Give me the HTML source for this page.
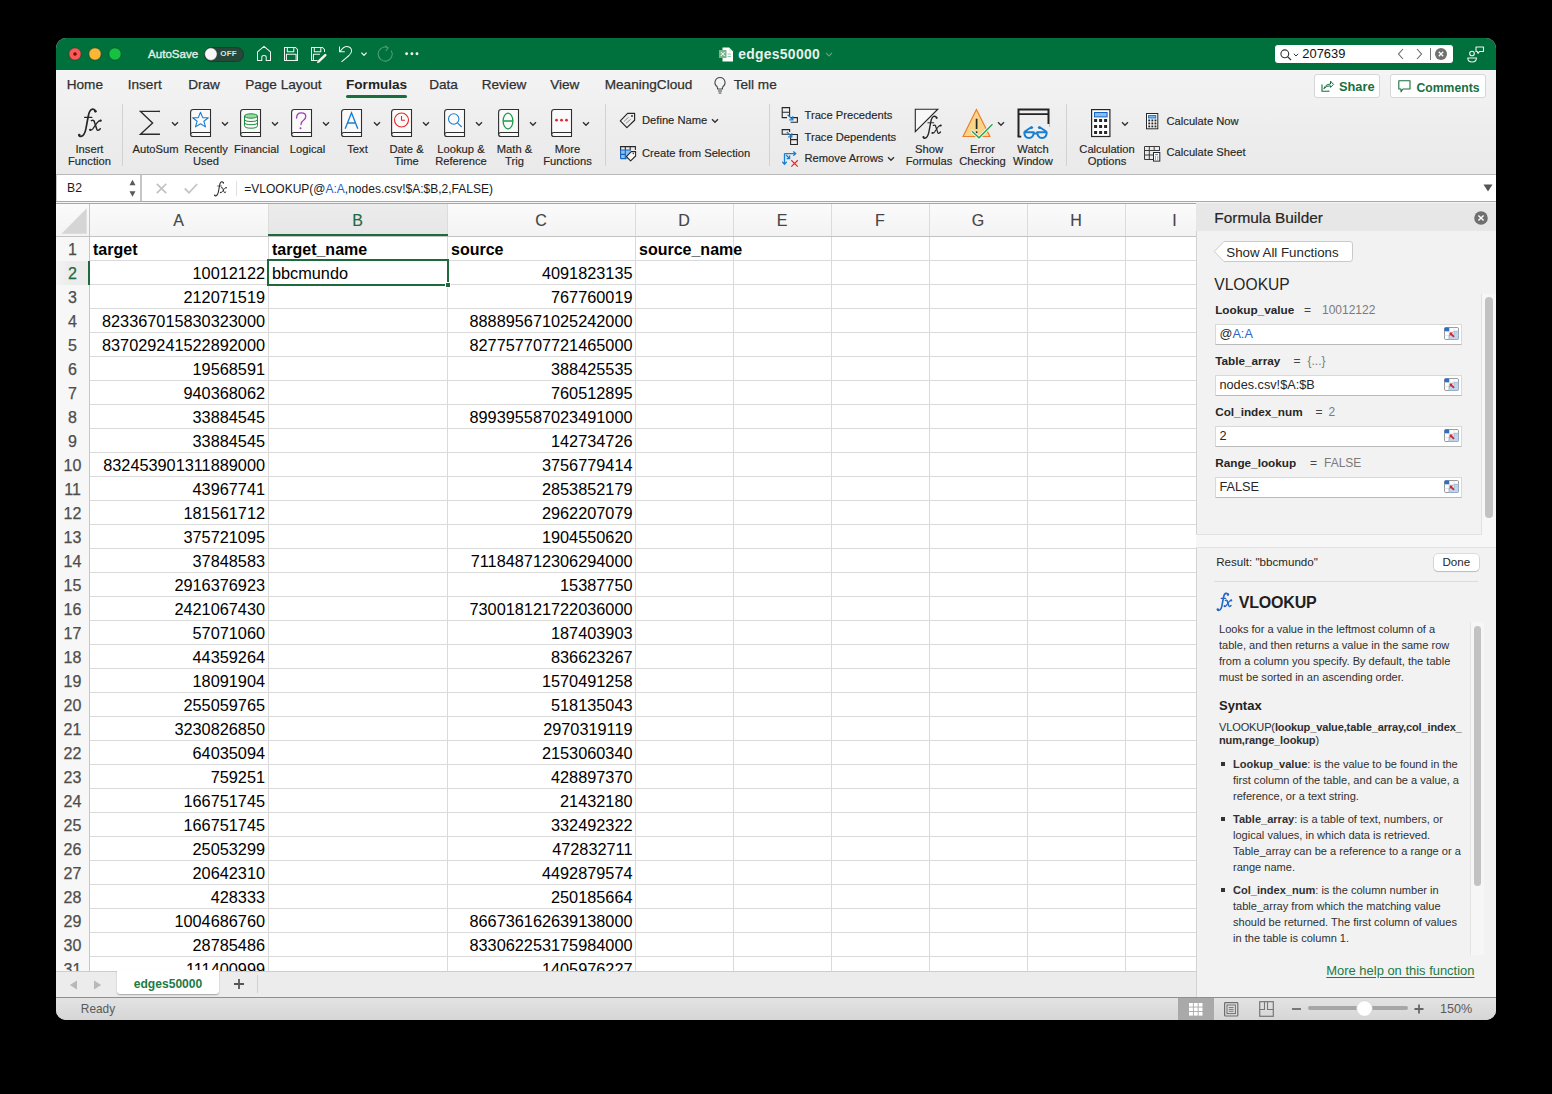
<!DOCTYPE html><html><head><meta charset="utf-8"><style>
*{box-sizing:border-box;margin:0;padding:0}
html,body{width:1552px;height:1094px;background:#000;overflow:hidden;font-family:"Liberation Sans",sans-serif;}
#win{position:absolute;left:56px;top:38px;width:1440px;height:982px;border-radius:10px;overflow:hidden;background:#efefef}
#in{position:absolute;left:-56px;top:-38px;width:1552px;height:1094px}
.a{position:absolute;white-space:nowrap}
svg.a{overflow:visible}
</style></head><body><div id="win"><div id="in"><div class="a" style="left:56px;top:38px;width:1440px;height:32px;background:#00703c"></div>
<svg class="a" style="left:68px;top:47px;" width="14" height="14" viewBox="0 0 14 14"><circle cx="7" cy="7" r="6.2" fill="#ff5757" stroke="#0b4a28" stroke-width="0.7"/></svg>
<svg class="a" style="left:88px;top:47px;" width="14" height="14" viewBox="0 0 14 14"><circle cx="7" cy="7" r="6.2" fill="#fdb535" stroke="#0b4a28" stroke-width="0.7"/></svg>
<svg class="a" style="left:108px;top:47px;" width="14" height="14" viewBox="0 0 14 14"><circle cx="7" cy="7" r="6.2" fill="#16c142" stroke="#0b4a28" stroke-width="0.7"/></svg>
<svg class="a" style="left:72px;top:51px;" width="6" height="6" viewBox="0 0 6 6"><circle cx="3" cy="3" r="1.8" fill="#6b0f0a"/></svg>
<div class="a" style="left:148px;top:48.18px;font-size:11.6px;line-height:11.6px;color:#e4efe8;font-weight:normal;-webkit-text-stroke:0.35px #e4efe8">AutoSave</div>
<div class="a" style="left:204px;top:47px;width:40px;height:14.5px;background:#27473a;border-radius:8px;border:1px solid #1d3a2b"></div>
<svg class="a" style="left:204px;top:47px;" width="16" height="15" viewBox="0 0 16 15"><circle cx="6.9" cy="7.1" r="6.3" fill="#f7f7f7" stroke="#1e3a2a" stroke-width="0.6"/></svg>
<div class="a" style="left:220.3px;top:50.43px;font-size:8.0px;line-height:8.0px;color:#d8e6dc;font-weight:bold;letter-spacing:0.15px">OFF</div>
<svg class="a" style="left:250px;top:42px;" width="172" height="24" viewBox="0 0 172 24"><g fill="none" stroke="#f0f5f1" stroke-width="1.05" stroke-linejoin="round"><path d="M7.5 18.5 V9.8 L14 4.3 L20.5 9.8 V18.5 H16.2 V15.2 Q16.2 13.4 14 13.4 Q11.8 13.4 11.8 15.2 V18.5 Z"/><path d="M34.5 5.5 H45.5 L47.5 7.5 V18.5 H34.5 Z"/><path d="M37.3 5.5 V9.8 H43.8 V5.5"/><path d="M36.4 18.5 V12.3 H46.1 V18.5"/><path d="M67.5 18.5 H61.5 V5.5 H72.5 L74.5 7.5 V10"/><path d="M64.3 5.5 V9.8 H70.8 V5.5"/><path d="M63.4 18.5 V12.3 H70"/><path d="M89.5 4.5 V9.8 H94.8"/><path d="M90 9.6 Q93.5 4.5 97 4.6 Q101.5 5 101.6 9 Q101.5 11 99 13.5 L91.5 19.8"/><path d="M111.4 10.6 L114 13.4 L116.6 10.6" stroke-width="1.2"/></g><path d="M67.6 18.8 L74.4 12.2 Q75.3 11.4 76.2 12.3 Q77 13.2 76.2 14 L69.4 20.6 L67 21.3 Z" fill="#f0f5f1"/><path d="M141.2 8.5 A7 7 0 1 1 137.8 5.6" fill="none" stroke="#4e9c6e" stroke-width="1.05"/><path d="M135 3.8 L138.2 5.8 L135.8 8.8" fill="none" stroke="#4e9c6e" stroke-width="1.05"/><circle cx="156.6" cy="11.8" r="1.45" fill="#f0f5f1"/><circle cx="161.9" cy="11.8" r="1.45" fill="#f0f5f1"/><circle cx="167" cy="11.8" r="1.45" fill="#f0f5f1"/></svg>
<svg class="a" style="left:719px;top:47px;" width="15" height="15" viewBox="0 0 15 15"><path d="M3.5 0.5 H10 L14 4.5 V14.5 H3.5 Z" fill="#ffffff"/><path d="M10 0.5 V4.5 H14" fill="#e6e6e6"/><rect x="0" y="3" width="7.5" height="8" fill="#7bb58e"/><path d="M1.8 5 L5.7 9 M5.7 5 L1.8 9" stroke="#fff" stroke-width="1"/><path d="M8.5 7 H12 M8.5 9.5 H12" stroke="#8fcaa3" stroke-width="1"/></svg>
<div class="a" style="left:738.2px;top:48.43px;font-size:13.9px;line-height:13.9px;color:#e8f1eb;font-weight:bold;letter-spacing:0.3px">edges50000</div>
<svg class="a" style="left:825px;top:52px;" width="8" height="5" viewBox="0 0 8 5"><path d="M1 1 L4 4 L7 1" fill="none" stroke="#5aa57b" stroke-width="1.1"/></svg>
<div class="a" style="left:1275px;top:45px;width:178px;height:18px;background:#fff;border-radius:3px"></div>
<svg class="a" style="left:1280px;top:49px;" width="12" height="12" viewBox="0 0 12 12"><circle cx="4.8" cy="4.8" r="3.9" fill="none" stroke="#333" stroke-width="1.1"/><path d="M7.6 7.6 L11 11" stroke="#333" stroke-width="1.2"/></svg>
<svg class="a" style="left:1293px;top:53px;" width="6" height="4" viewBox="0 0 6 4"><path d="M0.8 0.8 L3 3 L5.2 0.8" fill="none" stroke="#333" stroke-width="1"/></svg>
<div class="a" style="left:1302.3px;top:47.98px;font-size:12.9px;line-height:12.9px;color:#111;font-weight:normal;">207639</div>
<svg class="a" style="left:1397px;top:48px;" width="8" height="12" viewBox="0 0 8 12"><path d="M6 1 L1.5 6 L6 11" fill="none" stroke="#666" stroke-width="1.1"/></svg>
<svg class="a" style="left:1415px;top:48px;" width="8" height="12" viewBox="0 0 8 12"><path d="M2 1 L6.5 6 L2 11" fill="none" stroke="#666" stroke-width="1.1"/></svg>
<div class="a" style="left:1430px;top:48px;width:1px;height:12px;background:#777"></div>
<svg class="a" style="left:1435px;top:48px;" width="12" height="12" viewBox="0 0 12 12"><circle cx="6" cy="6" r="6" fill="#707070"/><path d="M3.8 3.8 L8.2 8.2 M8.2 3.8 L3.8 8.2" stroke="#fff" stroke-width="1.3"/></svg>
<svg class="a" style="left:1467px;top:46px;" width="18" height="17" viewBox="0 0 18 17"><circle cx="5" cy="7.5" r="2.3" fill="none" stroke="#f0f5f1" stroke-width="1.1"/><path d="M0.8 12 H9.4 Q9.4 16 5.1 16 Q0.8 16 0.8 12Z" fill="none" stroke="#f0f5f1" stroke-width="1.1"/><path d="M9 1 H16.5 V5.5 H12.5 L11 7.3 L10.3 5.5 H9 Z" fill="none" stroke="#f0f5f1" stroke-width="1.1" stroke-linejoin="round"/></svg>
<div class="a" style="left:56px;top:70px;width:1440px;height:105px;background:linear-gradient(#f4f4f4,#ededed 55%,#eaeaea)"></div>
<div class="a" style="left:66.7px;top:77.69px;font-size:13.6px;line-height:13.6px;color:#303030;font-weight:normal;-webkit-text-stroke:0.25px #303030">Home</div>
<div class="a" style="left:127.7px;top:77.69px;font-size:13.6px;line-height:13.6px;color:#303030;font-weight:normal;-webkit-text-stroke:0.25px #303030">Insert</div>
<div class="a" style="left:188.2px;top:77.69px;font-size:13.6px;line-height:13.6px;color:#303030;font-weight:normal;-webkit-text-stroke:0.25px #303030">Draw</div>
<div class="a" style="left:245.2px;top:77.69px;font-size:13.6px;line-height:13.6px;color:#303030;font-weight:normal;-webkit-text-stroke:0.25px #303030">Page Layout</div>
<div class="a" style="left:429.2px;top:77.69px;font-size:13.6px;line-height:13.6px;color:#303030;font-weight:normal;-webkit-text-stroke:0.25px #303030">Data</div>
<div class="a" style="left:481.7px;top:77.69px;font-size:13.6px;line-height:13.6px;color:#303030;font-weight:normal;-webkit-text-stroke:0.25px #303030">Review</div>
<div class="a" style="left:550.2px;top:77.69px;font-size:13.6px;line-height:13.6px;color:#303030;font-weight:normal;-webkit-text-stroke:0.25px #303030">View</div>
<div class="a" style="left:604.7px;top:77.69px;font-size:13.6px;line-height:13.6px;color:#303030;font-weight:normal;-webkit-text-stroke:0.25px #303030">MeaningCloud</div>
<div class="a" style="left:733.7px;top:77.69px;font-size:13.6px;line-height:13.6px;color:#303030;font-weight:normal;-webkit-text-stroke:0.25px #303030">Tell me</div>
<div class="a" style="left:346px;top:77.69px;font-size:13.6px;line-height:13.6px;color:#222;font-weight:bold;">Formulas</div>
<div class="a" style="left:346px;top:95px;width:61px;height:3px;background:#186e3f;border-radius:2px"></div>
<svg class="a" style="left:713px;top:76px;" width="14" height="18" viewBox="0 0 14 18"><path d="M7 1.5 A5 5 0 0 0 4 10.5 Q4.5 11.5 4.6 13 H9.4 Q9.5 11.5 10 10.5 A5 5 0 0 0 7 1.5Z" fill="none" stroke="#444" stroke-width="1.1"/><path d="M5 15 H9 M5.6 17 H8.4" stroke="#444" stroke-width="1.1"/></svg>
<div class="a" style="left:1313.5px;top:74px;width:66px;height:23.5px;background:#fff;border:1px solid #d6d6d6;border-radius:3px"></div>
<svg class="a" style="left:1321px;top:79px;" width="13" height="14" viewBox="0 0 13 14"><path d="M1 5.5 V12.3 H7.8 V11.5" fill="none" stroke="#186e3f" stroke-width="1.1"/><path d="M2.8 9.8 Q4 5.5 9.5 5 V2.2 L12.5 5.3 L9.5 8.4 V6.8 Q5.5 6.5 2.8 9.8Z" fill="none" stroke="#186e3f" stroke-width="1" stroke-linejoin="round"/></svg>
<div class="a" style="left:1339px;top:81.16px;font-size:12.8px;line-height:12.8px;color:#186e3f;font-weight:bold;">Share</div>
<div class="a" style="left:1390px;top:74px;width:96px;height:23.5px;background:#fff;border:1px solid #d6d6d6;border-radius:3px"></div>
<svg class="a" style="left:1398px;top:79.5px;" width="14" height="14" viewBox="0 0 14 14"><path d="M0.8 0.8 H12 V9 H5 L3 11.8 V9 H0.8 Z" fill="none" stroke="#186e3f" stroke-width="1.1" stroke-linejoin="round"/></svg>
<div class="a" style="left:1416.5px;top:81.67px;font-size:12.2px;line-height:12.2px;color:#186e3f;font-weight:bold;">Comments</div>
<div class="a" style="left:121.8px;top:104px;width:1px;height:62px;background:#d2d2d2"></div>
<div class="a" style="left:605.2px;top:104px;width:1px;height:62px;background:#d2d2d2"></div>
<div class="a" style="left:768.5px;top:104px;width:1px;height:62px;background:#d2d2d2"></div>
<div class="a" style="left:1066px;top:104px;width:1px;height:62px;background:#d2d2d2"></div>
<svg class="a" style="left:70px;top:104px;" width="36" height="38" viewBox="0 0 36 38"><g transform="scale(1.0)" fill="none" stroke="#262626" stroke-linecap="round"><path d="M25.6 7.4 Q24.6 4.7 22 5.3 Q19.3 6.1 18.2 12.5 L15.9 24.8 Q14.5 31.6 11 32.4 Q9.4 32.7 9 31.2" stroke-width="1.7"/><path d="M14.6 13.3 H21.9" stroke-width="1.2"/><path d="M21.4 16.6 Q23.2 15.5 24.1 17 L26.8 25.2 Q27.7 27.6 30.3 24.7" stroke-width="1.5"/><path d="M30.7 16.5 Q28.6 16.5 27 18.8 L22.8 24.8 Q21.6 26.4 20.1 25.9" stroke-width="1.3"/></g><g transform="scale(1.0)" fill="#262626"><circle cx="25.4" cy="7.2" r="1.25"/><circle cx="9.3" cy="31" r="1.25"/><circle cx="30.6" cy="16.7" r="1.15"/><circle cx="20.2" cy="25.8" r="1.15"/></g></svg>
<div class="a" style="left:-60.5px;width:300px;text-align:center;top:143.72px;font-size:11.2px;line-height:11.2px;color:#262626;font-weight:normal;-webkit-text-stroke:0.15px #262626">Insert</div>
<div class="a" style="left:-60.5px;width:300px;text-align:center;top:155.52px;font-size:11.2px;line-height:11.2px;color:#262626;font-weight:normal;-webkit-text-stroke:0.15px #262626">Function</div>
<svg class="a" style="left:139px;top:110px;" width="22" height="26" viewBox="0 0 22 26"><path d="M20.5 1.4 H1.5 L13.6 13 L1.5 24.3 H20.5" fill="none" stroke="#2a2a2a" stroke-width="1.4" stroke-linejoin="miter"/><path d="M19.2 0.8 H20.9 V2.4 Z M19.2 24.9 H20.9 V23.3 Z" fill="#2a2a2a"/></svg>
<svg class="a" style="left:170.5px;top:121.3px;" width="8" height="6" viewBox="0 0 8 6"><path d="M1 1.3 L4 4.3 L7 1.3" fill="none" stroke="#333" stroke-width="1.4"/></svg>
<div class="a" style="left:5.5px;width:300px;text-align:center;top:143.72px;font-size:11.2px;line-height:11.2px;color:#262626;font-weight:normal;-webkit-text-stroke:0.15px #262626">AutoSum</div>
<svg class="a" style="left:190px;top:109px;" width="22" height="29" viewBox="0 0 22 29"><path d="M3.3 0.5 H20.5 V27.5 H3 Q0.6 27.5 0.6 25.2 V3.3 Q0.6 0.5 3.3 0.5Z" fill="#fafafa" stroke="#2e2e2e" stroke-width="1.1"/><path d="M0.8 25.3 Q0.8 23.5 3 23.5 H20.5" fill="none" stroke="#2e2e2e" stroke-width="1.1"/><path d="M10.5 3.2 L12.7 8.6 L18.3 8.7 L13.9 12.3 L15.5 17.9 L10.5 14.7 L5.5 17.9 L7.1 12.3 L2.7 8.7 L8.3 8.6 Z" fill="none" stroke="#1b7fd1" stroke-width="1.1" stroke-linejoin="round"/></svg>
<svg class="a" style="left:221px;top:121.3px;" width="8" height="6" viewBox="0 0 8 6"><path d="M1 1.3 L4 4.3 L7 1.3" fill="none" stroke="#333" stroke-width="1.4"/></svg>
<div class="a" style="left:56px;width:300px;text-align:center;top:143.72px;font-size:11.2px;line-height:11.2px;color:#262626;font-weight:normal;-webkit-text-stroke:0.15px #262626">Recently</div>
<div class="a" style="left:56px;width:300px;text-align:center;top:155.52px;font-size:11.2px;line-height:11.2px;color:#262626;font-weight:normal;-webkit-text-stroke:0.15px #262626">Used</div>
<svg class="a" style="left:240px;top:109px;" width="22" height="29" viewBox="0 0 22 29"><path d="M3.3 0.5 H20.5 V27.5 H3 Q0.6 27.5 0.6 25.2 V3.3 Q0.6 0.5 3.3 0.5Z" fill="#fafafa" stroke="#2e2e2e" stroke-width="1.1"/><path d="M0.8 25.3 Q0.8 23.5 3 23.5 H20.5" fill="none" stroke="#2e2e2e" stroke-width="1.1"/><ellipse cx="11" cy="7" rx="6.5" ry="2.2" fill="#98dba1" stroke="#1f8a3f" stroke-width="1"/><path d="M4.5 7 V16.5 Q4.5 19.2 11 19.2 Q17.5 19.2 17.5 16.5 V7" fill="none" stroke="#1f8a3f" stroke-width="1"/><path d="M4.5 10.2 Q4.5 12.5 11 12.5 Q17.5 12.5 17.5 10.2 M4.5 13.4 Q4.5 15.7 11 15.7 Q17.5 15.7 17.5 13.4" fill="none" stroke="#1f8a3f" stroke-width="1"/></svg>
<svg class="a" style="left:271px;top:121.3px;" width="8" height="6" viewBox="0 0 8 6"><path d="M1 1.3 L4 4.3 L7 1.3" fill="none" stroke="#333" stroke-width="1.4"/></svg>
<div class="a" style="left:106.5px;width:300px;text-align:center;top:143.72px;font-size:11.2px;line-height:11.2px;color:#262626;font-weight:normal;-webkit-text-stroke:0.15px #262626">Financial</div>
<svg class="a" style="left:291px;top:109px;" width="22" height="29" viewBox="0 0 22 29"><path d="M3.3 0.5 H20.5 V27.5 H3 Q0.6 27.5 0.6 25.2 V3.3 Q0.6 0.5 3.3 0.5Z" fill="#fafafa" stroke="#2e2e2e" stroke-width="1.1"/><path d="M0.8 25.3 Q0.8 23.5 3 23.5 H20.5" fill="none" stroke="#2e2e2e" stroke-width="1.1"/><path d="M5.6 9 Q5.6 3.8 10.2 3.8 Q14.8 3.8 14.8 7.6 Q14.8 9.6 12.5 11.2 Q10 12.8 10 15.5" fill="none" stroke="#a23fb8" stroke-width="1.3" stroke-linecap="round"/><circle cx="9.5" cy="19.3" r="1" fill="#a23fb8"/></svg>
<svg class="a" style="left:322px;top:121.3px;" width="8" height="6" viewBox="0 0 8 6"><path d="M1 1.3 L4 4.3 L7 1.3" fill="none" stroke="#333" stroke-width="1.4"/></svg>
<div class="a" style="left:157.5px;width:300px;text-align:center;top:143.72px;font-size:11.2px;line-height:11.2px;color:#262626;font-weight:normal;-webkit-text-stroke:0.15px #262626">Logical</div>
<svg class="a" style="left:341px;top:109px;" width="22" height="29" viewBox="0 0 22 29"><path d="M3.3 0.5 H20.5 V27.5 H3 Q0.6 27.5 0.6 25.2 V3.3 Q0.6 0.5 3.3 0.5Z" fill="#fafafa" stroke="#2e2e2e" stroke-width="1.1"/><path d="M0.8 25.3 Q0.8 23.5 3 23.5 H20.5" fill="none" stroke="#2e2e2e" stroke-width="1.1"/><path d="M4.2 19.8 L10.5 3.8 L16.8 19.8 M6.5 14 H14.5" fill="none" stroke="#1b7fd1" stroke-width="1.4"/></svg>
<svg class="a" style="left:372.5px;top:121.3px;" width="8" height="6" viewBox="0 0 8 6"><path d="M1 1.3 L4 4.3 L7 1.3" fill="none" stroke="#333" stroke-width="1.4"/></svg>
<div class="a" style="left:207.5px;width:300px;text-align:center;top:143.72px;font-size:11.2px;line-height:11.2px;color:#262626;font-weight:normal;-webkit-text-stroke:0.15px #262626">Text</div>
<svg class="a" style="left:391px;top:109px;" width="22" height="29" viewBox="0 0 22 29"><path d="M3.3 0.5 H20.5 V27.5 H3 Q0.6 27.5 0.6 25.2 V3.3 Q0.6 0.5 3.3 0.5Z" fill="#fafafa" stroke="#2e2e2e" stroke-width="1.1"/><path d="M0.8 25.3 Q0.8 23.5 3 23.5 H20.5" fill="none" stroke="#2e2e2e" stroke-width="1.1"/><circle cx="10.5" cy="11" r="7" fill="none" stroke="#e5282b" stroke-width="1.1"/><path d="M10.5 7 V11.3 H14" fill="none" stroke="#e5282b" stroke-width="1.1"/></svg>
<svg class="a" style="left:422px;top:121.3px;" width="8" height="6" viewBox="0 0 8 6"><path d="M1 1.3 L4 4.3 L7 1.3" fill="none" stroke="#333" stroke-width="1.4"/></svg>
<div class="a" style="left:256.5px;width:300px;text-align:center;top:143.72px;font-size:11.2px;line-height:11.2px;color:#262626;font-weight:normal;-webkit-text-stroke:0.15px #262626">Date &amp;</div>
<div class="a" style="left:256.5px;width:300px;text-align:center;top:155.52px;font-size:11.2px;line-height:11.2px;color:#262626;font-weight:normal;-webkit-text-stroke:0.15px #262626">Time</div>
<svg class="a" style="left:444px;top:109px;" width="22" height="29" viewBox="0 0 22 29"><path d="M3.3 0.5 H20.5 V27.5 H3 Q0.6 27.5 0.6 25.2 V3.3 Q0.6 0.5 3.3 0.5Z" fill="#fafafa" stroke="#2e2e2e" stroke-width="1.1"/><path d="M0.8 25.3 Q0.8 23.5 3 23.5 H20.5" fill="none" stroke="#2e2e2e" stroke-width="1.1"/><circle cx="9.7" cy="10" r="5.2" fill="none" stroke="#1b7fd1" stroke-width="1.1"/><path d="M13.5 13.8 L17.7 18" stroke="#1b7fd1" stroke-width="1.1"/></svg>
<svg class="a" style="left:475px;top:121.3px;" width="8" height="6" viewBox="0 0 8 6"><path d="M1 1.3 L4 4.3 L7 1.3" fill="none" stroke="#333" stroke-width="1.4"/></svg>
<div class="a" style="left:311px;width:300px;text-align:center;top:143.72px;font-size:11.2px;line-height:11.2px;color:#262626;font-weight:normal;-webkit-text-stroke:0.15px #262626">Lookup &amp;</div>
<div class="a" style="left:311px;width:300px;text-align:center;top:155.52px;font-size:11.2px;line-height:11.2px;color:#262626;font-weight:normal;-webkit-text-stroke:0.15px #262626">Reference</div>
<svg class="a" style="left:498px;top:109px;" width="22" height="29" viewBox="0 0 22 29"><path d="M3.3 0.5 H20.5 V27.5 H3 Q0.6 27.5 0.6 25.2 V3.3 Q0.6 0.5 3.3 0.5Z" fill="#fafafa" stroke="#2e2e2e" stroke-width="1.1"/><path d="M0.8 25.3 Q0.8 23.5 3 23.5 H20.5" fill="none" stroke="#2e2e2e" stroke-width="1.1"/><ellipse cx="10" cy="12" rx="4.9" ry="7.8" fill="none" stroke="#1a9c47" stroke-width="1.3"/><path d="M5.2 12 H14.8" stroke="#1a9c47" stroke-width="1.3"/></svg>
<svg class="a" style="left:529px;top:121.3px;" width="8" height="6" viewBox="0 0 8 6"><path d="M1 1.3 L4 4.3 L7 1.3" fill="none" stroke="#333" stroke-width="1.4"/></svg>
<div class="a" style="left:364.5px;width:300px;text-align:center;top:143.72px;font-size:11.2px;line-height:11.2px;color:#262626;font-weight:normal;-webkit-text-stroke:0.15px #262626">Math &amp;</div>
<div class="a" style="left:364.5px;width:300px;text-align:center;top:155.52px;font-size:11.2px;line-height:11.2px;color:#262626;font-weight:normal;-webkit-text-stroke:0.15px #262626">Trig</div>
<svg class="a" style="left:551px;top:109px;" width="22" height="29" viewBox="0 0 22 29"><path d="M3.3 0.5 H20.5 V27.5 H3 Q0.6 27.5 0.6 25.2 V3.3 Q0.6 0.5 3.3 0.5Z" fill="#fafafa" stroke="#2e2e2e" stroke-width="1.1"/><path d="M0.8 25.3 Q0.8 23.5 3 23.5 H20.5" fill="none" stroke="#2e2e2e" stroke-width="1.1"/><circle cx="5.5" cy="11.2" r="1.4" fill="#e5282b"/><circle cx="10.5" cy="11.2" r="1.4" fill="#e5282b"/><circle cx="15.5" cy="11.2" r="1.4" fill="#e5282b"/></svg>
<svg class="a" style="left:582px;top:121.3px;" width="8" height="6" viewBox="0 0 8 6"><path d="M1 1.3 L4 4.3 L7 1.3" fill="none" stroke="#333" stroke-width="1.4"/></svg>
<div class="a" style="left:417.5px;width:300px;text-align:center;top:143.72px;font-size:11.2px;line-height:11.2px;color:#262626;font-weight:normal;-webkit-text-stroke:0.15px #262626">More</div>
<div class="a" style="left:417.5px;width:300px;text-align:center;top:155.52px;font-size:11.2px;line-height:11.2px;color:#262626;font-weight:normal;-webkit-text-stroke:0.15px #262626">Functions</div>
<svg class="a" style="left:614px;top:108px;" width="26" height="56" viewBox="0 0 26 56"><path d="M6.3 12.8 L13.6 5.4 H20.6 V12.3 L12.9 19.6 Z" fill="none" stroke="#262626" stroke-width="1.2" stroke-linejoin="round"/><circle cx="18" cy="8" r="0.9" fill="#262626"/><path d="M10.2 13.3 L14.6 9.2 M12.1 15.3 L16.6 11.3" stroke="#888" stroke-width="1"/><path d="M6.6 50.6 V38.6 H21.4 V42" fill="none" stroke="#262626" stroke-width="1.1"/><path d="M11.3 38.6 V42 M16.2 38.6 V42" stroke="#262626" stroke-width="1.1"/><rect x="6.6" y="42" width="10" height="8.8" fill="#8cc0ef"/><path d="M6.6 42 H17 M6.6 46.4 H12 M11.3 42 V50.6 M6.6 50.6 H12.5 M6.6 42 V50.6" fill="none" stroke="#1565c6" stroke-width="1.1"/><path d="M12.4 48.6 L17.2 43.6 H21.6 V48 L16.6 52.8 Z" fill="#f8f8f8" stroke="#262626" stroke-width="1.1" stroke-linejoin="round"/><circle cx="19.3" cy="45.5" r="0.7" fill="#262626"/></svg>
<div class="a" style="left:642px;top:115.22px;font-size:11.2px;line-height:11.2px;color:#262626;font-weight:normal;-webkit-text-stroke:0.15px #262626">Define Name</div>
<svg class="a" style="left:711px;top:118.1px;" width="8" height="6" viewBox="0 0 8 6"><path d="M1 1.3 L4 4.3 L7 1.3" fill="none" stroke="#333" stroke-width="1.4"/></svg>
<div class="a" style="left:642px;top:147.52px;font-size:11.2px;line-height:11.2px;color:#262626;font-weight:normal;-webkit-text-stroke:0.15px #262626">Create from Selection</div>
<svg class="a" style="left:776px;top:104px;" width="30" height="66" viewBox="0 0 30 66"><path d="M11 13.6 H6.2 V3.6 H13.6 V13" fill="none" stroke="#262626" stroke-width="1.1"/><path d="M6.2 8.2 H13.6" stroke="#262626" stroke-width="1.1"/><path d="M14.6 13.6 H21.4 V18.3 H14.6" fill="none" stroke="#262626" stroke-width="1.1"/><path d="M11.6 10.8 L16.6 15.6" stroke="#1b7fd1" stroke-width="1.3"/><path d="M13.2 15.8 H16.8 V12.2" fill="none" stroke="#1b7fd1" stroke-width="1.3"/><path d="M13.6 30.3 H6.2 V25.6 H13.6 V28" fill="none" stroke="#262626" stroke-width="1.1"/><path d="M14.6 30.5 H21.4 V40.5 H14.6 Z M14.6 35.6 H21.4" fill="none" stroke="#262626" stroke-width="1.1"/><path d="M10.8 28 L15.6 32.6" stroke="#1b7fd1" stroke-width="1.3"/><path d="M12.2 32.8 H15.8 V29.2" fill="none" stroke="#1b7fd1" stroke-width="1.3"/><path d="M8.5 49.6 V60" stroke="#1b7fd1" stroke-width="1.3"/><path d="M6.3 57.8 L8.5 60.2 L10.7 57.8" fill="none" stroke="#1b7fd1" stroke-width="1.3"/><path d="M8.5 49.6 H19.5" stroke="#1b7fd1" stroke-width="1.3"/><path d="M17.3 47.4 L19.7 49.6 L17.3 51.8" fill="none" stroke="#1b7fd1" stroke-width="1.3"/><path d="M10 51 L13.3 54.3" stroke="#1b7fd1" stroke-width="1.3"/><path d="M10.6 54.6 H13.6 V51.6" fill="none" stroke="#1b7fd1" stroke-width="1.3"/><path d="M15.3 56.2 L21.8 62.6 M21.8 56.2 L15.3 62.6" stroke="#e5282b" stroke-width="1.2"/></svg>
<div class="a" style="left:804.5px;top:109.52px;font-size:11.2px;line-height:11.2px;color:#262626;font-weight:normal;-webkit-text-stroke:0.15px #262626">Trace Precedents</div>
<div class="a" style="left:804.5px;top:131.52px;font-size:11.2px;line-height:11.2px;color:#262626;font-weight:normal;-webkit-text-stroke:0.15px #262626">Trace Dependents</div>
<div class="a" style="left:804.5px;top:153.32px;font-size:11.2px;line-height:11.2px;color:#262626;font-weight:normal;-webkit-text-stroke:0.15px #262626">Remove Arrows</div>
<svg class="a" style="left:886.5px;top:156.0px;" width="8" height="6" viewBox="0 0 8 6"><path d="M1 1.3 L4 4.3 L7 1.3" fill="none" stroke="#333" stroke-width="1.4"/></svg>
<svg class="a" style="left:910px;top:104px;" width="40" height="40" viewBox="0 0 40 40"><path d="M5.3 5.2 H27.8 L5.3 27.6 Z" fill="#f8f8f8" stroke="#262626" stroke-width="1.1" stroke-linejoin="miter"/></svg>
<svg class="a" style="left:915.8px;top:112px;" width="29" height="31" viewBox="0 0 29 31"><g transform="scale(0.81)" fill="none" stroke="#262626" stroke-linecap="round"><path d="M25.6 7.4 Q24.6 4.7 22 5.3 Q19.3 6.1 18.2 12.5 L15.9 24.8 Q14.5 31.6 11 32.4 Q9.4 32.7 9 31.2" stroke-width="1.7"/><path d="M14.6 13.3 H21.9" stroke-width="1.2"/><path d="M21.4 16.6 Q23.2 15.5 24.1 17 L26.8 25.2 Q27.7 27.6 30.3 24.7" stroke-width="1.5"/><path d="M30.7 16.5 Q28.6 16.5 27 18.8 L22.8 24.8 Q21.6 26.4 20.1 25.9" stroke-width="1.3"/></g><g transform="scale(0.81)" fill="#262626"><circle cx="25.4" cy="7.2" r="1.25"/><circle cx="9.3" cy="31" r="1.25"/><circle cx="30.6" cy="16.7" r="1.15"/><circle cx="20.2" cy="25.8" r="1.15"/></g></svg>
<div class="a" style="left:779px;width:300px;text-align:center;top:143.72px;font-size:11.2px;line-height:11.2px;color:#262626;font-weight:normal;-webkit-text-stroke:0.15px #262626">Show</div>
<div class="a" style="left:779px;width:300px;text-align:center;top:155.52px;font-size:11.2px;line-height:11.2px;color:#262626;font-weight:normal;-webkit-text-stroke:0.15px #262626">Formulas</div>
<svg class="a" style="left:960px;top:104px;" width="36" height="36" viewBox="0 0 36 36"><path d="M16.4 5.6 L29.9 32.5 H3.1 Z" fill="#f9d58a" stroke="#ef7d2d" stroke-width="1.2" stroke-linejoin="miter"/><path d="M16.6 14.8 V25" stroke="#262626" stroke-width="1.7"/><circle cx="16.6" cy="28.3" r="0.95" fill="#262626"/><path d="M11.6 26.9 L19 33.8 L32.9 19.9" fill="none" stroke="#f4f4f4" stroke-width="3"/><path d="M12 27.3 L19 33.8 L32.5 20.3" fill="none" stroke="#1aa64b" stroke-width="1.3"/></svg>
<svg class="a" style="left:997px;top:121.3px;" width="8" height="6" viewBox="0 0 8 6"><path d="M1 1.3 L4 4.3 L7 1.3" fill="none" stroke="#333" stroke-width="1.4"/></svg>
<div class="a" style="left:832.5px;width:300px;text-align:center;top:143.72px;font-size:11.2px;line-height:11.2px;color:#262626;font-weight:normal;-webkit-text-stroke:0.15px #262626">Error</div>
<div class="a" style="left:832.5px;width:300px;text-align:center;top:155.52px;font-size:11.2px;line-height:11.2px;color:#262626;font-weight:normal;-webkit-text-stroke:0.15px #262626">Checking</div>
<svg class="a" style="left:1010px;top:104px;" width="40" height="36" viewBox="0 0 40 36"><path d="M8.5 32.6 V5.6 H38.5 V23" fill="none" stroke="#222" stroke-width="2"/><path d="M8.5 10.2 H38.5" stroke="#222" stroke-width="1.8"/><path d="M7.6 32.6 H11.5" stroke="#222" stroke-width="1.6"/><path d="M11.5 20 H39.5 V35 H11.5 Z" fill="#efefef"/><path d="M14.3 28.3 H23.8 Q23.5 34 19 34 Q14.3 34 14.3 28.3 Z M27.2 28.3 H36.7 Q36.7 34 32 34 Q27.5 34 27.2 28.3 Z M23.8 29.6 H27.2 M14.5 27.8 L21.5 23 L22.8 24.2 M36.5 27.8 L29.5 23 L28.2 24.2" fill="none" stroke="#1b7fd1" stroke-width="2" stroke-linejoin="round"/></svg>
<div class="a" style="left:883px;width:300px;text-align:center;top:143.72px;font-size:11.2px;line-height:11.2px;color:#262626;font-weight:normal;-webkit-text-stroke:0.15px #262626">Watch</div>
<div class="a" style="left:883px;width:300px;text-align:center;top:155.52px;font-size:11.2px;line-height:11.2px;color:#262626;font-weight:normal;-webkit-text-stroke:0.15px #262626">Window</div>
<svg class="a" style="left:1085px;top:104px;" width="80" height="62" viewBox="0 0 80 62"><rect x="6.6" y="5.6" width="18.3" height="26.9" fill="#fff" stroke="#262626" stroke-width="1.2"/><rect x="9.5" y="8.5" width="12.6" height="4.4" fill="#85bdf0" stroke="#1565c6" stroke-width="1"/><rect x="9.1" y="15.0" width="3" height="3" fill="#262626"/><rect x="14.1" y="15.0" width="3" height="3" fill="#262626"/><rect x="19.1" y="15.0" width="3" height="3" fill="#262626"/><rect x="9.1" y="21.0" width="3" height="3" fill="#262626"/><rect x="14.1" y="21.0" width="3" height="3" fill="#262626"/><rect x="19.1" y="21.0" width="3" height="3" fill="#262626"/><rect x="9.1" y="27.0" width="3" height="3" fill="#262626"/><rect x="14.1" y="27.0" width="3" height="3" fill="#262626"/><rect x="19.1" y="27.0" width="3" height="3" fill="#262626"/><rect x="61.5" y="9.5" width="11.3" height="15.3" fill="#fff" stroke="#262626" stroke-width="1"/><rect x="63.6" y="11.6" width="7.2" height="2.4" fill="#85bdf0" stroke="#1565c6" stroke-width="0.9"/><rect x="63.3" y="15.5" width="1.9" height="1.9" fill="#262626"/><rect x="66.39999999999999" y="15.5" width="1.9" height="1.9" fill="#262626"/><rect x="69.5" y="15.5" width="1.9" height="1.9" fill="#262626"/><rect x="63.3" y="18.5" width="1.9" height="1.9" fill="#262626"/><rect x="66.39999999999999" y="18.5" width="1.9" height="1.9" fill="#262626"/><rect x="69.5" y="18.5" width="1.9" height="1.9" fill="#262626"/><rect x="63.3" y="21.5" width="1.9" height="1.9" fill="#262626"/><rect x="66.39999999999999" y="21.5" width="1.9" height="1.9" fill="#262626"/><rect x="69.5" y="21.5" width="1.9" height="1.9" fill="#262626"/><path d="M59.5 55.5 V42.5 H74.5 V47 M59.5 46.5 H74.5 M59.5 51 H68 M64.3 42.5 V55.5 M69.2 42.5 V47 M59.5 55.5 H68" fill="none" stroke="#3a3a3a" stroke-width="1"/><rect x="68.5" y="48.5" width="6.3" height="8.6" fill="#fff" stroke="#262626" stroke-width="1"/><path d="M70.2 50.7 H73" stroke="#1565c6" stroke-width="0.9"/><path d="M70.1 53 H71 M72.3 53 H73.2 M70.1 55 H71 M72.3 55 H73.2" stroke="#262626" stroke-width="0.9"/></svg>
<svg class="a" style="left:1121px;top:121.3px;" width="8" height="6" viewBox="0 0 8 6"><path d="M1 1.3 L4 4.3 L7 1.3" fill="none" stroke="#333" stroke-width="1.4"/></svg>
<div class="a" style="left:957px;width:300px;text-align:center;top:143.72px;font-size:11.2px;line-height:11.2px;color:#262626;font-weight:normal;-webkit-text-stroke:0.15px #262626">Calculation</div>
<div class="a" style="left:957px;width:300px;text-align:center;top:155.52px;font-size:11.2px;line-height:11.2px;color:#262626;font-weight:normal;-webkit-text-stroke:0.15px #262626">Options</div>
<div class="a" style="left:1166.5px;top:115.52px;font-size:11.2px;line-height:11.2px;color:#262626;font-weight:normal;-webkit-text-stroke:0.15px #262626">Calculate Now</div>
<div class="a" style="left:1166.5px;top:147.32px;font-size:11.2px;line-height:11.2px;color:#262626;font-weight:normal;-webkit-text-stroke:0.15px #262626">Calculate Sheet</div>
<div class="a" style="left:56px;top:174px;width:1440px;height:28px;background:#fff;border-top:1px solid #b9b9b9;border-bottom:1px solid #a8a8a8"></div>
<div class="a" style="left:56px;top:175px;width:85.5px;height:26px;border-left:1px solid #c9c9c9;border-right:2px solid #c6c6c6"></div>
<div class="a" style="left:67px;top:181.67px;font-size:12.2px;line-height:12.2px;color:#1a1a1a;font-weight:normal;">B2</div>
<svg class="a" style="left:129px;top:179px;" width="8" height="19" viewBox="0 0 8 19"><path d="M0.5 6.3 L3.5 0.8 L6.5 6.3 Z" fill="#5a5a5a"/><path d="M0.5 12.3 L3.5 17.8 L6.5 12.3 Z" fill="#5a5a5a"/></svg>
<svg class="a" style="left:156px;top:183px;" width="11" height="11" viewBox="0 0 11 11"><path d="M0.8 0.8 L10.2 10.2 M10.2 0.8 L0.8 10.2" stroke="#c4c4c4" stroke-width="1.8"/></svg>
<svg class="a" style="left:184px;top:183px;" width="14" height="11" viewBox="0 0 14 11"><path d="M0.8 5.5 L5 9.8 L13.2 1" fill="none" stroke="#c4c4c4" stroke-width="1.8"/></svg>
<svg class="a" style="left:209.5px;top:178.7px;" width="19" height="20" viewBox="0 0 19 20"><g transform="scale(0.525)" fill="none" stroke="#333" stroke-linecap="round"><path d="M25.6 7.4 Q24.6 4.7 22 5.3 Q19.3 6.1 18.2 12.5 L15.9 24.8 Q14.5 31.6 11 32.4 Q9.4 32.7 9 31.2" stroke-width="2.125"/><path d="M14.6 13.3 H21.9" stroke-width="1.5"/><path d="M21.4 16.6 Q23.2 15.5 24.1 17 L26.8 25.2 Q27.7 27.6 30.3 24.7" stroke-width="1.875"/><path d="M30.7 16.5 Q28.6 16.5 27 18.8 L22.8 24.8 Q21.6 26.4 20.1 25.9" stroke-width="1.625"/></g><g transform="scale(0.525)" fill="#333"><circle cx="25.4" cy="7.2" r="1.5625"/><circle cx="9.3" cy="31" r="1.5625"/><circle cx="30.6" cy="16.7" r="1.4375"/><circle cx="20.2" cy="25.8" r="1.4375"/></g></svg>
<div class="a" style="left:236px;top:181px;width:1px;height:15px;background:#e0e0e0"></div>
<div class="a" style="left:244.3px;top:183.04px;font-size:12.0px;line-height:12.0px;color:#1a1a1a;font-weight:normal;">=VLOOKUP(@<span style="color:#1f5fd0">A:A</span>,nodes.csv!$A:$B,2,FALSE)</div>
<svg class="a" style="left:1483px;top:184px;" width="10" height="8" viewBox="0 0 10 8"><path d="M0.5 0.5 H9.5 L5 7.5 Z" fill="#555"/></svg>
<div class="a" style="left:56px;top:202px;width:1440px;height:2px;background:#f4f4f4;border-bottom:1px solid #a8a8a8"></div>
<div class="a" style="left:56px;top:204px;width:1140px;height:767px;background:#fff;overflow:hidden"><div class="a" style="left:0px;top:-1px;width:1140px;height:34px;background:linear-gradient(#fbfbfb,#f3f3f3)"></div><div class="a" style="left:0px;top:33px;width:33px;height:740px;background:#f7f7f7"></div><div class="a" style="left:212px;top:-1px;width:179px;height:33px;background:linear-gradient(#ececec,#e6e6e6)"></div><div class="a" style="left:0px;top:57px;width:33px;height:24px;background:linear-gradient(90deg,#f3f3f3,#ececec 40%)"></div><div class="a" style="left:0px;top:32px;width:1140px;height:1px;background:#c2c2c2"></div><div class="a" style="left:33px;top:-1px;width:1px;height:770px;background:#c6c6c6"></div><div class="a" style="left:212px;top:-1px;width:1px;height:33px;background:#dcdcdc"></div><div class="a" style="left:212px;top:33px;width:1px;height:740px;background:#dadada"></div><div class="a" style="left:391px;top:-1px;width:1px;height:33px;background:#dcdcdc"></div><div class="a" style="left:391px;top:33px;width:1px;height:740px;background:#dadada"></div><div class="a" style="left:579px;top:-1px;width:1px;height:33px;background:#dcdcdc"></div><div class="a" style="left:579px;top:33px;width:1px;height:740px;background:#dadada"></div><div class="a" style="left:677px;top:-1px;width:1px;height:33px;background:#dcdcdc"></div><div class="a" style="left:677px;top:33px;width:1px;height:740px;background:#dadada"></div><div class="a" style="left:775px;top:-1px;width:1px;height:33px;background:#dcdcdc"></div><div class="a" style="left:775px;top:33px;width:1px;height:740px;background:#dadada"></div><div class="a" style="left:873px;top:-1px;width:1px;height:33px;background:#dcdcdc"></div><div class="a" style="left:873px;top:33px;width:1px;height:740px;background:#dadada"></div><div class="a" style="left:971px;top:-1px;width:1px;height:33px;background:#dcdcdc"></div><div class="a" style="left:971px;top:33px;width:1px;height:740px;background:#dadada"></div><div class="a" style="left:1069px;top:-1px;width:1px;height:33px;background:#dcdcdc"></div><div class="a" style="left:1069px;top:33px;width:1px;height:740px;background:#dadada"></div><div class="a" style="left:34px;top:56px;width:1106px;height:1px;background:#dadada"></div><div class="a" style="left:34px;top:80px;width:1106px;height:1px;background:#dadada"></div><div class="a" style="left:34px;top:104px;width:1106px;height:1px;background:#dadada"></div><div class="a" style="left:34px;top:128px;width:1106px;height:1px;background:#dadada"></div><div class="a" style="left:34px;top:152px;width:1106px;height:1px;background:#dadada"></div><div class="a" style="left:34px;top:176px;width:1106px;height:1px;background:#dadada"></div><div class="a" style="left:34px;top:200px;width:1106px;height:1px;background:#dadada"></div><div class="a" style="left:34px;top:224px;width:1106px;height:1px;background:#dadada"></div><div class="a" style="left:34px;top:248px;width:1106px;height:1px;background:#dadada"></div><div class="a" style="left:34px;top:272px;width:1106px;height:1px;background:#dadada"></div><div class="a" style="left:34px;top:296px;width:1106px;height:1px;background:#dadada"></div><div class="a" style="left:34px;top:320px;width:1106px;height:1px;background:#dadada"></div><div class="a" style="left:34px;top:344px;width:1106px;height:1px;background:#dadada"></div><div class="a" style="left:34px;top:368px;width:1106px;height:1px;background:#dadada"></div><div class="a" style="left:34px;top:392px;width:1106px;height:1px;background:#dadada"></div><div class="a" style="left:34px;top:416px;width:1106px;height:1px;background:#dadada"></div><div class="a" style="left:34px;top:440px;width:1106px;height:1px;background:#dadada"></div><div class="a" style="left:34px;top:464px;width:1106px;height:1px;background:#dadada"></div><div class="a" style="left:34px;top:488px;width:1106px;height:1px;background:#dadada"></div><div class="a" style="left:34px;top:512px;width:1106px;height:1px;background:#dadada"></div><div class="a" style="left:34px;top:536px;width:1106px;height:1px;background:#dadada"></div><div class="a" style="left:34px;top:560px;width:1106px;height:1px;background:#dadada"></div><div class="a" style="left:34px;top:584px;width:1106px;height:1px;background:#dadada"></div><div class="a" style="left:34px;top:608px;width:1106px;height:1px;background:#dadada"></div><div class="a" style="left:34px;top:632px;width:1106px;height:1px;background:#dadada"></div><div class="a" style="left:34px;top:656px;width:1106px;height:1px;background:#dadada"></div><div class="a" style="left:34px;top:680px;width:1106px;height:1px;background:#dadada"></div><div class="a" style="left:34px;top:704px;width:1106px;height:1px;background:#dadada"></div><div class="a" style="left:34px;top:728px;width:1106px;height:1px;background:#dadada"></div><div class="a" style="left:34px;top:752px;width:1106px;height:1px;background:#dadada"></div><div class="a" style="left:34px;top:776px;width:1106px;height:1px;background:#dadada"></div><svg class="a" style="left:5px;top:4px" width="26" height="26"><path d="M0.5 25.7 L25.7 0.3 V25.7 Z" fill="#d5d5d5"/></svg><div class="a" style="left:72.5px;width:100px;text-align:center;top:8.96px;font-size:16px;line-height:16px;color:#454545;-webkit-text-stroke:0.15px #454545">A</div><div class="a" style="left:251.5px;width:100px;text-align:center;top:8.96px;font-size:16px;line-height:16px;color:#1d6b3d;-webkit-text-stroke:0.15px #1d6b3d">B</div><div class="a" style="left:435.0px;width:100px;text-align:center;top:8.96px;font-size:16px;line-height:16px;color:#454545;-webkit-text-stroke:0.15px #454545">C</div><div class="a" style="left:578.0px;width:100px;text-align:center;top:8.96px;font-size:16px;line-height:16px;color:#454545;-webkit-text-stroke:0.15px #454545">D</div><div class="a" style="left:676.0px;width:100px;text-align:center;top:8.96px;font-size:16px;line-height:16px;color:#454545;-webkit-text-stroke:0.15px #454545">E</div><div class="a" style="left:774.0px;width:100px;text-align:center;top:8.96px;font-size:16px;line-height:16px;color:#454545;-webkit-text-stroke:0.15px #454545">F</div><div class="a" style="left:872.0px;width:100px;text-align:center;top:8.96px;font-size:16px;line-height:16px;color:#454545;-webkit-text-stroke:0.15px #454545">G</div><div class="a" style="left:970.0px;width:100px;text-align:center;top:8.96px;font-size:16px;line-height:16px;color:#454545;-webkit-text-stroke:0.15px #454545">H</div><div class="a" style="left:1068.5px;width:100px;text-align:center;top:8.96px;font-size:16px;line-height:16px;color:#454545;-webkit-text-stroke:0.15px #454545">I</div><div class="a" style="left:212px;top:30px;width:180px;height:2px;background:#1d6b3d"></div><div class="a" style="left:0px;width:33px;text-align:center;top:37.66px;font-size:16px;line-height:16px;color:#4d4d4d;-webkit-text-stroke:0.25px #4d4d4d">1</div><div class="a" style="left:0px;width:33px;text-align:center;top:61.66px;font-size:16px;line-height:16px;color:#1d6b3d;-webkit-text-stroke:0.25px #1d6b3d">2</div><div class="a" style="left:0px;width:33px;text-align:center;top:85.66px;font-size:16px;line-height:16px;color:#4d4d4d;-webkit-text-stroke:0.25px #4d4d4d">3</div><div class="a" style="left:0px;width:33px;text-align:center;top:109.66px;font-size:16px;line-height:16px;color:#4d4d4d;-webkit-text-stroke:0.25px #4d4d4d">4</div><div class="a" style="left:0px;width:33px;text-align:center;top:133.66px;font-size:16px;line-height:16px;color:#4d4d4d;-webkit-text-stroke:0.25px #4d4d4d">5</div><div class="a" style="left:0px;width:33px;text-align:center;top:157.66px;font-size:16px;line-height:16px;color:#4d4d4d;-webkit-text-stroke:0.25px #4d4d4d">6</div><div class="a" style="left:0px;width:33px;text-align:center;top:181.66px;font-size:16px;line-height:16px;color:#4d4d4d;-webkit-text-stroke:0.25px #4d4d4d">7</div><div class="a" style="left:0px;width:33px;text-align:center;top:205.66px;font-size:16px;line-height:16px;color:#4d4d4d;-webkit-text-stroke:0.25px #4d4d4d">8</div><div class="a" style="left:0px;width:33px;text-align:center;top:229.66px;font-size:16px;line-height:16px;color:#4d4d4d;-webkit-text-stroke:0.25px #4d4d4d">9</div><div class="a" style="left:0px;width:33px;text-align:center;top:253.66px;font-size:16px;line-height:16px;color:#4d4d4d;-webkit-text-stroke:0.25px #4d4d4d">10</div><div class="a" style="left:0px;width:33px;text-align:center;top:277.66px;font-size:16px;line-height:16px;color:#4d4d4d;-webkit-text-stroke:0.25px #4d4d4d">11</div><div class="a" style="left:0px;width:33px;text-align:center;top:301.66px;font-size:16px;line-height:16px;color:#4d4d4d;-webkit-text-stroke:0.25px #4d4d4d">12</div><div class="a" style="left:0px;width:33px;text-align:center;top:325.66px;font-size:16px;line-height:16px;color:#4d4d4d;-webkit-text-stroke:0.25px #4d4d4d">13</div><div class="a" style="left:0px;width:33px;text-align:center;top:349.66px;font-size:16px;line-height:16px;color:#4d4d4d;-webkit-text-stroke:0.25px #4d4d4d">14</div><div class="a" style="left:0px;width:33px;text-align:center;top:373.66px;font-size:16px;line-height:16px;color:#4d4d4d;-webkit-text-stroke:0.25px #4d4d4d">15</div><div class="a" style="left:0px;width:33px;text-align:center;top:397.66px;font-size:16px;line-height:16px;color:#4d4d4d;-webkit-text-stroke:0.25px #4d4d4d">16</div><div class="a" style="left:0px;width:33px;text-align:center;top:421.66px;font-size:16px;line-height:16px;color:#4d4d4d;-webkit-text-stroke:0.25px #4d4d4d">17</div><div class="a" style="left:0px;width:33px;text-align:center;top:445.66px;font-size:16px;line-height:16px;color:#4d4d4d;-webkit-text-stroke:0.25px #4d4d4d">18</div><div class="a" style="left:0px;width:33px;text-align:center;top:469.66px;font-size:16px;line-height:16px;color:#4d4d4d;-webkit-text-stroke:0.25px #4d4d4d">19</div><div class="a" style="left:0px;width:33px;text-align:center;top:493.66px;font-size:16px;line-height:16px;color:#4d4d4d;-webkit-text-stroke:0.25px #4d4d4d">20</div><div class="a" style="left:0px;width:33px;text-align:center;top:517.66px;font-size:16px;line-height:16px;color:#4d4d4d;-webkit-text-stroke:0.25px #4d4d4d">21</div><div class="a" style="left:0px;width:33px;text-align:center;top:541.66px;font-size:16px;line-height:16px;color:#4d4d4d;-webkit-text-stroke:0.25px #4d4d4d">22</div><div class="a" style="left:0px;width:33px;text-align:center;top:565.66px;font-size:16px;line-height:16px;color:#4d4d4d;-webkit-text-stroke:0.25px #4d4d4d">23</div><div class="a" style="left:0px;width:33px;text-align:center;top:589.66px;font-size:16px;line-height:16px;color:#4d4d4d;-webkit-text-stroke:0.25px #4d4d4d">24</div><div class="a" style="left:0px;width:33px;text-align:center;top:613.66px;font-size:16px;line-height:16px;color:#4d4d4d;-webkit-text-stroke:0.25px #4d4d4d">25</div><div class="a" style="left:0px;width:33px;text-align:center;top:637.66px;font-size:16px;line-height:16px;color:#4d4d4d;-webkit-text-stroke:0.25px #4d4d4d">26</div><div class="a" style="left:0px;width:33px;text-align:center;top:661.66px;font-size:16px;line-height:16px;color:#4d4d4d;-webkit-text-stroke:0.25px #4d4d4d">27</div><div class="a" style="left:0px;width:33px;text-align:center;top:685.66px;font-size:16px;line-height:16px;color:#4d4d4d;-webkit-text-stroke:0.25px #4d4d4d">28</div><div class="a" style="left:0px;width:33px;text-align:center;top:709.66px;font-size:16px;line-height:16px;color:#4d4d4d;-webkit-text-stroke:0.25px #4d4d4d">29</div><div class="a" style="left:0px;width:33px;text-align:center;top:733.66px;font-size:16px;line-height:16px;color:#4d4d4d;-webkit-text-stroke:0.25px #4d4d4d">30</div><div class="a" style="left:0px;width:33px;text-align:center;top:757.66px;font-size:16px;line-height:16px;color:#4d4d4d;-webkit-text-stroke:0.25px #4d4d4d">31</div><div class="a" style="left:32px;top:57px;width:2px;height:24px;background:#1d6b3d"></div><div class="a" style="left:37px;top:38.26px;font-size:16px;line-height:16px;color:#000;font-weight:bold;">target</div><div class="a" style="left:216px;top:38.26px;font-size:16px;line-height:16px;color:#000;font-weight:bold;">target_name</div><div class="a" style="left:395px;top:38.26px;font-size:16px;line-height:16px;color:#000;font-weight:bold;">source</div><div class="a" style="left:583px;top:38.26px;font-size:16px;line-height:16px;color:#000;font-weight:bold;">source_name</div><div class="a" style="right:931px;top:61.40px;font-size:16.3px;line-height:16.3px;color:#000;font-weight:normal;">10012122</div><div class="a" style="right:563.5px;top:61.40px;font-size:16.3px;line-height:16.3px;color:#000;font-weight:normal;">4091823135</div><div class="a" style="right:931px;top:85.40px;font-size:16.3px;line-height:16.3px;color:#000;font-weight:normal;">212071519</div><div class="a" style="right:563.5px;top:85.40px;font-size:16.3px;line-height:16.3px;color:#000;font-weight:normal;">767760019</div><div class="a" style="right:931px;top:109.40px;font-size:16.3px;line-height:16.3px;color:#000;font-weight:normal;">823367015830323000</div><div class="a" style="right:563.5px;top:109.40px;font-size:16.3px;line-height:16.3px;color:#000;font-weight:normal;">888895671025242000</div><div class="a" style="right:931px;top:133.40px;font-size:16.3px;line-height:16.3px;color:#000;font-weight:normal;">837029241522892000</div><div class="a" style="right:563.5px;top:133.40px;font-size:16.3px;line-height:16.3px;color:#000;font-weight:normal;">827757707721465000</div><div class="a" style="right:931px;top:157.40px;font-size:16.3px;line-height:16.3px;color:#000;font-weight:normal;">19568591</div><div class="a" style="right:563.5px;top:157.40px;font-size:16.3px;line-height:16.3px;color:#000;font-weight:normal;">388425535</div><div class="a" style="right:931px;top:181.40px;font-size:16.3px;line-height:16.3px;color:#000;font-weight:normal;">940368062</div><div class="a" style="right:563.5px;top:181.40px;font-size:16.3px;line-height:16.3px;color:#000;font-weight:normal;">760512895</div><div class="a" style="right:931px;top:205.40px;font-size:16.3px;line-height:16.3px;color:#000;font-weight:normal;">33884545</div><div class="a" style="right:563.5px;top:205.40px;font-size:16.3px;line-height:16.3px;color:#000;font-weight:normal;">899395587023491000</div><div class="a" style="right:931px;top:229.40px;font-size:16.3px;line-height:16.3px;color:#000;font-weight:normal;">33884545</div><div class="a" style="right:563.5px;top:229.40px;font-size:16.3px;line-height:16.3px;color:#000;font-weight:normal;">142734726</div><div class="a" style="right:931px;top:253.40px;font-size:16.3px;line-height:16.3px;color:#000;font-weight:normal;">832453901311889000</div><div class="a" style="right:563.5px;top:253.40px;font-size:16.3px;line-height:16.3px;color:#000;font-weight:normal;">3756779414</div><div class="a" style="right:931px;top:277.40px;font-size:16.3px;line-height:16.3px;color:#000;font-weight:normal;">43967741</div><div class="a" style="right:563.5px;top:277.40px;font-size:16.3px;line-height:16.3px;color:#000;font-weight:normal;">2853852179</div><div class="a" style="right:931px;top:301.40px;font-size:16.3px;line-height:16.3px;color:#000;font-weight:normal;">181561712</div><div class="a" style="right:563.5px;top:301.40px;font-size:16.3px;line-height:16.3px;color:#000;font-weight:normal;">2962207079</div><div class="a" style="right:931px;top:325.40px;font-size:16.3px;line-height:16.3px;color:#000;font-weight:normal;">375721095</div><div class="a" style="right:563.5px;top:325.40px;font-size:16.3px;line-height:16.3px;color:#000;font-weight:normal;">1904550620</div><div class="a" style="right:931px;top:349.40px;font-size:16.3px;line-height:16.3px;color:#000;font-weight:normal;">37848583</div><div class="a" style="right:563.5px;top:349.40px;font-size:16.3px;line-height:16.3px;color:#000;font-weight:normal;">711848712306294000</div><div class="a" style="right:931px;top:373.40px;font-size:16.3px;line-height:16.3px;color:#000;font-weight:normal;">2916376923</div><div class="a" style="right:563.5px;top:373.40px;font-size:16.3px;line-height:16.3px;color:#000;font-weight:normal;">15387750</div><div class="a" style="right:931px;top:397.40px;font-size:16.3px;line-height:16.3px;color:#000;font-weight:normal;">2421067430</div><div class="a" style="right:563.5px;top:397.40px;font-size:16.3px;line-height:16.3px;color:#000;font-weight:normal;">730018121722036000</div><div class="a" style="right:931px;top:421.40px;font-size:16.3px;line-height:16.3px;color:#000;font-weight:normal;">57071060</div><div class="a" style="right:563.5px;top:421.40px;font-size:16.3px;line-height:16.3px;color:#000;font-weight:normal;">187403903</div><div class="a" style="right:931px;top:445.40px;font-size:16.3px;line-height:16.3px;color:#000;font-weight:normal;">44359264</div><div class="a" style="right:563.5px;top:445.40px;font-size:16.3px;line-height:16.3px;color:#000;font-weight:normal;">836623267</div><div class="a" style="right:931px;top:469.40px;font-size:16.3px;line-height:16.3px;color:#000;font-weight:normal;">18091904</div><div class="a" style="right:563.5px;top:469.40px;font-size:16.3px;line-height:16.3px;color:#000;font-weight:normal;">1570491258</div><div class="a" style="right:931px;top:493.40px;font-size:16.3px;line-height:16.3px;color:#000;font-weight:normal;">255059765</div><div class="a" style="right:563.5px;top:493.40px;font-size:16.3px;line-height:16.3px;color:#000;font-weight:normal;">518135043</div><div class="a" style="right:931px;top:517.40px;font-size:16.3px;line-height:16.3px;color:#000;font-weight:normal;">3230826850</div><div class="a" style="right:563.5px;top:517.40px;font-size:16.3px;line-height:16.3px;color:#000;font-weight:normal;">2970319119</div><div class="a" style="right:931px;top:541.40px;font-size:16.3px;line-height:16.3px;color:#000;font-weight:normal;">64035094</div><div class="a" style="right:563.5px;top:541.40px;font-size:16.3px;line-height:16.3px;color:#000;font-weight:normal;">2153060340</div><div class="a" style="right:931px;top:565.40px;font-size:16.3px;line-height:16.3px;color:#000;font-weight:normal;">759251</div><div class="a" style="right:563.5px;top:565.40px;font-size:16.3px;line-height:16.3px;color:#000;font-weight:normal;">428897370</div><div class="a" style="right:931px;top:589.40px;font-size:16.3px;line-height:16.3px;color:#000;font-weight:normal;">166751745</div><div class="a" style="right:563.5px;top:589.40px;font-size:16.3px;line-height:16.3px;color:#000;font-weight:normal;">21432180</div><div class="a" style="right:931px;top:613.40px;font-size:16.3px;line-height:16.3px;color:#000;font-weight:normal;">166751745</div><div class="a" style="right:563.5px;top:613.40px;font-size:16.3px;line-height:16.3px;color:#000;font-weight:normal;">332492322</div><div class="a" style="right:931px;top:637.40px;font-size:16.3px;line-height:16.3px;color:#000;font-weight:normal;">25053299</div><div class="a" style="right:563.5px;top:637.40px;font-size:16.3px;line-height:16.3px;color:#000;font-weight:normal;">472832711</div><div class="a" style="right:931px;top:661.40px;font-size:16.3px;line-height:16.3px;color:#000;font-weight:normal;">20642310</div><div class="a" style="right:563.5px;top:661.40px;font-size:16.3px;line-height:16.3px;color:#000;font-weight:normal;">4492879574</div><div class="a" style="right:931px;top:685.40px;font-size:16.3px;line-height:16.3px;color:#000;font-weight:normal;">428333</div><div class="a" style="right:563.5px;top:685.40px;font-size:16.3px;line-height:16.3px;color:#000;font-weight:normal;">250185664</div><div class="a" style="right:931px;top:709.40px;font-size:16.3px;line-height:16.3px;color:#000;font-weight:normal;">1004686760</div><div class="a" style="right:563.5px;top:709.40px;font-size:16.3px;line-height:16.3px;color:#000;font-weight:normal;">866736162639138000</div><div class="a" style="right:931px;top:733.40px;font-size:16.3px;line-height:16.3px;color:#000;font-weight:normal;">28785486</div><div class="a" style="right:563.5px;top:733.40px;font-size:16.3px;line-height:16.3px;color:#000;font-weight:normal;">833062253175984000</div><div class="a" style="right:931px;top:757.40px;font-size:16.3px;line-height:16.3px;color:#000;font-weight:normal;">111400999</div><div class="a" style="right:563.5px;top:757.40px;font-size:16.3px;line-height:16.3px;color:#000;font-weight:normal;">1405976227</div><div class="a" style="left:216px;top:61.40px;font-size:16.3px;line-height:16.3px;color:#000;font-weight:normal;">bbcmundo</div><div class="a" style="left:211px;top:55px;width:182px;height:26.5px;border:2px solid #1d6b3d"></div><div class="a" style="left:388.5px;top:77.5px;width:6px;height:6px;background:#1d6b3d;border:1px solid #fff"></div></div>
<div class="a" style="left:56px;top:971px;width:1140px;height:26px;background:#ececec;border-top:1px solid #cdcdcd"></div>
<svg class="a" style="left:69px;top:980px;" width="9" height="10" viewBox="0 0 9 10"><path d="M8 0.5 V9.5 L0.8 5 Z" fill="#b8b8b8"/></svg>
<svg class="a" style="left:93px;top:980px;" width="9" height="10" viewBox="0 0 9 10"><path d="M1 0.5 V9.5 L8.2 5 Z" fill="#b8b8b8"/></svg>
<div class="a" style="left:117px;top:970px;width:102px;height:23.5px;background:#fff;border-radius:0 0 3px 3px;box-shadow:0 1px 1.5px rgba(0,0,0,0.3)"></div>
<div class="a" style="left:18px;width:300px;text-align:center;top:978.36px;font-size:12.1px;line-height:12.1px;color:#1d7a45;font-weight:bold;">edges50000</div>
<svg class="a" style="left:233px;top:978px;" width="12" height="12" viewBox="0 0 12 12"><path d="M6 1 V11 M1 6 H11" stroke="#555" stroke-width="1.8"/></svg>
<div class="a" style="left:257px;top:975px;width:1px;height:18px;background:#d0d0d0"></div>
<div class="a" style="left:56px;top:997px;width:1440px;height:23px;background:linear-gradient(#e3e3e3,#d6d6d6);border-top:1px solid #8f8f8f"></div>
<div class="a" style="left:80.8px;top:1003.53px;font-size:11.9px;line-height:11.9px;color:#5a5a5a;font-weight:normal;">Ready</div>
<div class="a" style="left:1177.5px;top:998px;width:36.5px;height:22px;background:#a9a9a9"></div>
<svg class="a" style="left:1188.5px;top:1002.5px;" width="14" height="13" viewBox="0 0 14 13"><rect x="0.0" y="0.0" width="3.9" height="3.6" fill="#fff"/><rect x="4.8" y="0.0" width="3.9" height="3.6" fill="#fff"/><rect x="9.6" y="0.0" width="3.9" height="3.6" fill="#fff"/><rect x="0.0" y="4.5" width="3.9" height="3.6" fill="#fff"/><rect x="4.8" y="4.5" width="3.9" height="3.6" fill="#fff"/><rect x="9.6" y="4.5" width="3.9" height="3.6" fill="#fff"/><rect x="0.0" y="9.0" width="3.9" height="3.6" fill="#fff"/><rect x="4.8" y="9.0" width="3.9" height="3.6" fill="#fff"/><rect x="9.6" y="9.0" width="3.9" height="3.6" fill="#fff"/></svg>
<svg class="a" style="left:1224px;top:1001.5px;" width="15" height="15" viewBox="0 0 15 15"><rect x="0.6" y="0.6" width="13.2" height="13.4" rx="0.8" fill="none" stroke="#6e6e6e" stroke-width="1.2"/><rect x="3" y="3" width="8.4" height="8.6" fill="none" stroke="#6e6e6e" stroke-width="1"/><path d="M4.8 5.5 H9.6 M4.8 7.4 H9.6 M4.8 9.3 H9.6" stroke="#6e6e6e" stroke-width="0.9"/></svg>
<svg class="a" style="left:1259px;top:1001px;" width="15" height="16" viewBox="0 0 15 16"><rect x="0.7" y="0.7" width="13.6" height="14.6" fill="none" stroke="#777" stroke-width="1.2"/><path d="M5.5 0.7 V8.5 H0.7 M8.5 0.7 V8.5 H14.3" fill="none" stroke="#777" stroke-width="1.1"/></svg>
<div class="a" style="left:1292px;top:1007.5px;width:9px;height:2px;background:#777"></div>
<div class="a" style="left:1308px;top:1005.5px;width:100px;height:4.5px;background:#a6a6a6;border-radius:3px"></div>
<svg class="a" style="left:1356px;top:1000px;" width="17" height="17" viewBox="0 0 17 17"><circle cx="8.5" cy="8.5" r="7.8" fill="#fff" stroke="#cfcfcf" stroke-width="0.6"/></svg>
<svg class="a" style="left:1414px;top:1004px;" width="10" height="10" viewBox="0 0 10 10"><path d="M5 0.5 V9.5 M0.5 5 H9.5" stroke="#666" stroke-width="1.8"/></svg>
<div class="a" style="left:1440px;top:1002.53px;font-size:12.6px;line-height:12.6px;color:#5a5a5a;font-weight:normal;">150%</div>
<div class="a" style="left:1195.5px;top:203px;width:300.5px;height:794px;background:#f2f2f2;border-left:1px solid #d2d2d2"></div>
<div class="a" style="left:1196px;top:203px;width:300px;height:28px;background:#e7e7e7"></div>
<div class="a" style="left:1214.3px;top:210.16px;font-size:15.4px;line-height:15.4px;color:#262626;font-weight:normal;-webkit-text-stroke:0.2px #262626">Formula Builder</div>
<svg class="a" style="left:1474px;top:211px;" width="14" height="14" viewBox="0 0 14 14"><circle cx="7" cy="7" r="6.8" fill="#6f6f6f"/><path d="M4.4 4.4 L9.6 9.6 M9.6 4.4 L4.4 9.6" stroke="#fff" stroke-width="1.4"/></svg>
<svg class="a" style="left:1213px;top:240px;" width="141" height="23" viewBox="0 0 141 23"><path d="M11 1.5 H137 Q139.5 1.5 139.5 4 V18.5 Q139.5 21.5 137 21.5 H11 L1.3 11.5 Z" fill="#fff" stroke="#c9c9c9" stroke-width="1"/></svg>
<div class="a" style="left:1226.3px;top:246.34px;font-size:13.3px;line-height:13.3px;color:#262626;font-weight:normal;">Show All Functions</div>
<div class="a" style="left:1214.3px;top:277.09px;font-size:15.6px;line-height:15.6px;color:#262626;font-weight:normal;transform:scaleY(1.1);transform-origin:0 100%">VLOOKUP</div>
<div class="a" style="left:1196px;top:294px;width:286px;height:241px;border-right:1px solid #e2e2e2;border-bottom:1px solid #e2e2e2"></div>
<div class="a" style="left:1482px;top:294px;width:14px;height:241px;background:#f7f7f7"></div>
<div class="a" style="left:1485px;top:297px;width:8px;height:221px;background:#c2c2c2;border-radius:4px"></div>
<div class="a" style="left:1196px;top:535px;width:300px;height:13px;background:#f7f7f7;border-bottom:1px solid #e3e3e3"></div>
<div class="a" style="left:1215.2px;top:303.85px;font-size:11.75px;line-height:11.75px;color:#262626;font-weight:bold;">Lookup_value</div>
<div class="a" style="left:1304px;top:303.64px;font-size:12px;line-height:12px;color:#444;font-weight:normal;">=</div>
<div class="a" style="left:1322px;top:303.64px;font-size:12px;line-height:12px;color:#7a7a7a;font-weight:normal;">10012122</div>
<div class="a" style="left:1215px;top:323.5px;width:247px;height:21px;background:#fff;border:1px solid #d9d9d9;border-bottom-color:#b9b9b9;border-radius:1px"></div>
<div class="a" style="left:1219.5px;top:327.95px;font-size:12.7px;line-height:12.7px;color:#262626;font-weight:normal;">@<span style="color:#2f63c9">A:A</span></div>
<svg class="a" style="left:1444px;top:327.0px;" width="16" height="14" viewBox="0 0 16 14"><rect x="0.5" y="0.5" width="14" height="12" rx="1.3" fill="#fff" stroke="#8d8d8d" stroke-width="0.9"/><path d="M10 4.3 H14.5 V11.5 Q14.5 12.5 13.5 12.5 H5 V8.5 H10 Z" fill="#bcd4ee"/><path d="M5 0.5 V12.5 M10 0.5 V12.5 M0.5 4.3 H14.5 M0.5 8.5 H14.5" stroke="#d6d6d6" stroke-width="0.6"/><path d="M10 4.3 H14.5 V11.5 Q14.5 12.5 13.5 12.5 H5 V8.5 H10 Z" fill="none" stroke="#86a8d0" stroke-width="0.6"/><path d="M1.5 0.5 H5.2 V4.3 H0.5 V1.5 Q0.5 0.5 1.5 0.5Z" fill="#2d6fc2"/><path d="M10 9.8 L6.3 6.1" stroke="#c4262e" stroke-width="1.7"/><path d="M5.6 9 V5.4 H9.2 Z" fill="#c4262e"/></svg>
<div class="a" style="left:1215.2px;top:354.85px;font-size:11.75px;line-height:11.75px;color:#262626;font-weight:bold;">Table_array</div>
<div class="a" style="left:1293.5px;top:354.64px;font-size:12px;line-height:12px;color:#444;font-weight:normal;">=</div>
<div class="a" style="left:1307.5px;top:354.64px;font-size:12px;line-height:12px;color:#7a7a7a;font-weight:normal;">{...}</div>
<div class="a" style="left:1215px;top:374.5px;width:247px;height:21px;background:#fff;border:1px solid #d9d9d9;border-bottom-color:#b9b9b9;border-radius:1px"></div>
<div class="a" style="left:1219.5px;top:378.95px;font-size:12.7px;line-height:12.7px;color:#262626;font-weight:normal;">nodes.csv!$A:$B</div>
<svg class="a" style="left:1444px;top:378.0px;" width="16" height="14" viewBox="0 0 16 14"><rect x="0.5" y="0.5" width="14" height="12" rx="1.3" fill="#fff" stroke="#8d8d8d" stroke-width="0.9"/><path d="M10 4.3 H14.5 V11.5 Q14.5 12.5 13.5 12.5 H5 V8.5 H10 Z" fill="#bcd4ee"/><path d="M5 0.5 V12.5 M10 0.5 V12.5 M0.5 4.3 H14.5 M0.5 8.5 H14.5" stroke="#d6d6d6" stroke-width="0.6"/><path d="M10 4.3 H14.5 V11.5 Q14.5 12.5 13.5 12.5 H5 V8.5 H10 Z" fill="none" stroke="#86a8d0" stroke-width="0.6"/><path d="M1.5 0.5 H5.2 V4.3 H0.5 V1.5 Q0.5 0.5 1.5 0.5Z" fill="#2d6fc2"/><path d="M10 9.8 L6.3 6.1" stroke="#c4262e" stroke-width="1.7"/><path d="M5.6 9 V5.4 H9.2 Z" fill="#c4262e"/></svg>
<div class="a" style="left:1215.2px;top:405.85px;font-size:11.75px;line-height:11.75px;color:#262626;font-weight:bold;">Col_index_num</div>
<div class="a" style="left:1315.5px;top:405.64px;font-size:12px;line-height:12px;color:#444;font-weight:normal;">=</div>
<div class="a" style="left:1328.5px;top:405.64px;font-size:12px;line-height:12px;color:#7a7a7a;font-weight:normal;">2</div>
<div class="a" style="left:1215px;top:425.5px;width:247px;height:21px;background:#fff;border:1px solid #d9d9d9;border-bottom-color:#b9b9b9;border-radius:1px"></div>
<div class="a" style="left:1219.5px;top:429.95px;font-size:12.7px;line-height:12.7px;color:#262626;font-weight:normal;">2</div>
<svg class="a" style="left:1444px;top:429.0px;" width="16" height="14" viewBox="0 0 16 14"><rect x="0.5" y="0.5" width="14" height="12" rx="1.3" fill="#fff" stroke="#8d8d8d" stroke-width="0.9"/><path d="M10 4.3 H14.5 V11.5 Q14.5 12.5 13.5 12.5 H5 V8.5 H10 Z" fill="#bcd4ee"/><path d="M5 0.5 V12.5 M10 0.5 V12.5 M0.5 4.3 H14.5 M0.5 8.5 H14.5" stroke="#d6d6d6" stroke-width="0.6"/><path d="M10 4.3 H14.5 V11.5 Q14.5 12.5 13.5 12.5 H5 V8.5 H10 Z" fill="none" stroke="#86a8d0" stroke-width="0.6"/><path d="M1.5 0.5 H5.2 V4.3 H0.5 V1.5 Q0.5 0.5 1.5 0.5Z" fill="#2d6fc2"/><path d="M10 9.8 L6.3 6.1" stroke="#c4262e" stroke-width="1.7"/><path d="M5.6 9 V5.4 H9.2 Z" fill="#c4262e"/></svg>
<div class="a" style="left:1215.2px;top:456.85px;font-size:11.75px;line-height:11.75px;color:#262626;font-weight:bold;">Range_lookup</div>
<div class="a" style="left:1310px;top:456.64px;font-size:12px;line-height:12px;color:#444;font-weight:normal;">=</div>
<div class="a" style="left:1324px;top:456.64px;font-size:12px;line-height:12px;color:#7a7a7a;font-weight:normal;">FALSE</div>
<div class="a" style="left:1215px;top:476.5px;width:247px;height:21px;background:#fff;border:1px solid #d9d9d9;border-bottom-color:#b9b9b9;border-radius:1px"></div>
<div class="a" style="left:1219.5px;top:480.95px;font-size:12.7px;line-height:12.7px;color:#262626;font-weight:normal;">FALSE</div>
<svg class="a" style="left:1444px;top:480.0px;" width="16" height="14" viewBox="0 0 16 14"><rect x="0.5" y="0.5" width="14" height="12" rx="1.3" fill="#fff" stroke="#8d8d8d" stroke-width="0.9"/><path d="M10 4.3 H14.5 V11.5 Q14.5 12.5 13.5 12.5 H5 V8.5 H10 Z" fill="#bcd4ee"/><path d="M5 0.5 V12.5 M10 0.5 V12.5 M0.5 4.3 H14.5 M0.5 8.5 H14.5" stroke="#d6d6d6" stroke-width="0.6"/><path d="M10 4.3 H14.5 V11.5 Q14.5 12.5 13.5 12.5 H5 V8.5 H10 Z" fill="none" stroke="#86a8d0" stroke-width="0.6"/><path d="M1.5 0.5 H5.2 V4.3 H0.5 V1.5 Q0.5 0.5 1.5 0.5Z" fill="#2d6fc2"/><path d="M10 9.8 L6.3 6.1" stroke="#c4262e" stroke-width="1.7"/><path d="M5.6 9 V5.4 H9.2 Z" fill="#c4262e"/></svg>
<div class="a" style="left:1216.2px;top:556.18px;font-size:11.6px;line-height:11.6px;color:#262626;font-weight:normal;">Result: "bbcmundo"</div>
<div class="a" style="left:1434px;top:553.5px;width:44.5px;height:17px;background:#fff;border-radius:4px;box-shadow:0 0 0 0.6px rgba(0,0,0,0.18),0 1px 1px rgba(0,0,0,0.15)"></div>
<div class="a" style="left:1442.5px;top:556.18px;font-size:11.6px;line-height:11.6px;color:#262626;font-weight:normal;">Done</div>
<div class="a" style="left:1214px;top:581px;width:264px;height:1px;background:#dcdcdc"></div>
<svg class="a" style="left:1211.6px;top:589.9px;" width="23" height="24" viewBox="0 0 23 24"><g transform="scale(0.627)" fill="none" stroke="#2567c9" stroke-linecap="round"><path d="M25.6 7.4 Q24.6 4.7 22 5.3 Q19.3 6.1 18.2 12.5 L15.9 24.8 Q14.5 31.6 11 32.4 Q9.4 32.7 9 31.2" stroke-width="2.635"/><path d="M14.6 13.3 H21.9" stroke-width="1.8599999999999999"/><path d="M21.4 16.6 Q23.2 15.5 24.1 17 L26.8 25.2 Q27.7 27.6 30.3 24.7" stroke-width="2.325"/><path d="M30.7 16.5 Q28.6 16.5 27 18.8 L22.8 24.8 Q21.6 26.4 20.1 25.9" stroke-width="2.015"/></g><g transform="scale(0.627)" fill="#2567c9"><circle cx="25.4" cy="7.2" r="1.9375"/><circle cx="9.3" cy="31" r="1.9375"/><circle cx="30.6" cy="16.7" r="1.7825"/><circle cx="20.2" cy="25.8" r="1.7825"/></g></svg>
<div class="a" style="left:1238.8px;top:595.26px;font-size:16px;line-height:16px;color:#1f1f1f;font-weight:bold;letter-spacing:-0.2px">VLOOKUP</div>
<div class="a" style="left:1219px;top:623.65px;font-size:11.05px;line-height:11.05px;color:#303030;font-weight:normal;">Looks for a value in the leftmost column of a</div>
<div class="a" style="left:1219px;top:639.65px;font-size:11.05px;line-height:11.05px;color:#303030;font-weight:normal;">table, and then returns a value in the same row</div>
<div class="a" style="left:1219px;top:655.65px;font-size:11.05px;line-height:11.05px;color:#303030;font-weight:normal;">from a column you specify. By default, the table</div>
<div class="a" style="left:1219px;top:671.65px;font-size:11.05px;line-height:11.05px;color:#303030;font-weight:normal;">must be sorted in an ascending order.</div>
<div class="a" style="left:1219px;top:699.00px;font-size:13px;line-height:13px;color:#222;font-weight:bold;">Syntax</div>
<div class="a" style="left:1219px;top:721.65px;font-size:11.05px;line-height:11.05px;color:#303030;font-weight:normal;letter-spacing:-0.15px">VLOOKUP(<b>lookup_value,table_array,col_index_</b></div>
<div class="a" style="left:1219px;top:734.85px;font-size:11.05px;line-height:11.05px;color:#303030;font-weight:normal;letter-spacing:-0.15px"><b>num,range_lookup</b>)</div>
<div class="a" style="left:1220.5px;top:762px;width:4px;height:4px;background:#333"></div>
<div class="a" style="left:1233px;top:758.65px;font-size:11.05px;line-height:11.05px;color:#303030;font-weight:normal;"><b>Lookup_value</b>: is the value to be found in the</div>
<div class="a" style="left:1233px;top:774.65px;font-size:11.05px;line-height:11.05px;color:#303030;font-weight:normal;">first column of the table, and can be a value, a</div>
<div class="a" style="left:1233px;top:790.65px;font-size:11.05px;line-height:11.05px;color:#303030;font-weight:normal;">reference, or a text string.</div>
<div class="a" style="left:1220.5px;top:817px;width:4px;height:4px;background:#333"></div>
<div class="a" style="left:1233px;top:813.65px;font-size:11.05px;line-height:11.05px;color:#303030;font-weight:normal;"><b>Table_array</b>: is a table of text, numbers, or</div>
<div class="a" style="left:1233px;top:829.65px;font-size:11.05px;line-height:11.05px;color:#303030;font-weight:normal;">logical values, in which data is retrieved.</div>
<div class="a" style="left:1233px;top:845.65px;font-size:11.05px;line-height:11.05px;color:#303030;font-weight:normal;">Table_array can be a reference to a range or a</div>
<div class="a" style="left:1233px;top:861.65px;font-size:11.05px;line-height:11.05px;color:#303030;font-weight:normal;">range name.</div>
<div class="a" style="left:1220.5px;top:888px;width:4px;height:4px;background:#333"></div>
<div class="a" style="left:1233px;top:884.65px;font-size:11.05px;line-height:11.05px;color:#303030;font-weight:normal;"><b>Col_index_num</b>: is the column number in</div>
<div class="a" style="left:1233px;top:900.65px;font-size:11.05px;line-height:11.05px;color:#303030;font-weight:normal;">table_array from which the matching value</div>
<div class="a" style="left:1233px;top:916.65px;font-size:11.05px;line-height:11.05px;color:#303030;font-weight:normal;">should be returned. The first column of values</div>
<div class="a" style="left:1233px;top:932.65px;font-size:11.05px;line-height:11.05px;color:#303030;font-weight:normal;">in the table is column 1.</div>
<div class="a" style="left:1469.5px;top:622px;width:14px;height:333px;background:#f6f6f6;border-left:1px solid #e4e4e4"></div>
<div class="a" style="left:1473.5px;top:626px;width:7.5px;height:260px;background:#c2c2c2;border-radius:4px"></div>
<div class="a" style="left:1326.3px;top:965.04px;font-size:12.95px;line-height:12.95px;color:#1d7a45;font-weight:normal;text-decoration:underline;text-underline-offset:2px">More help on this function</div></div></div></body></html>
